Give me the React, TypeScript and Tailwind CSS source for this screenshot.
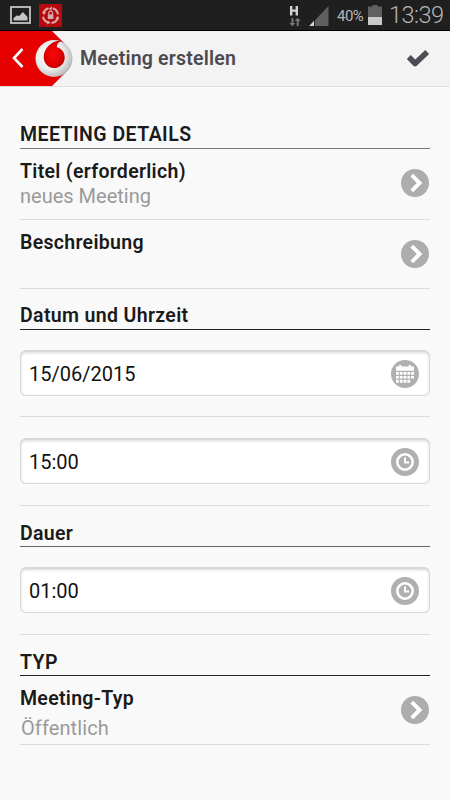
import type { ReactNode } from "react";

const ArrowIcon = () => (
  <svg className="h-7 w-7" viewBox="0 0 28 28">
    <circle cx="14" cy="14" r="14" fill="#adadad" />
    <path d="m10.800 6.200 7.800 7.800-7.800 7.800" fill="none" stroke="#fff" strokeWidth="3.900" />
  </svg>
);

const ClockIcon = () => (
  <svg className="h-7 w-7" viewBox="0 0 28 28">
    <circle cx="14" cy="14" r="14" fill="#b0b0b0" />
    <circle cx="14" cy="14" r="7.700" fill="none" stroke="#fff" strokeWidth="2.600" />
    <path d="M14 9.500v5h4" fill="none" stroke="#fff" strokeWidth="1.900" />
  </svg>
);

const CalendarIcon = () => (
  <svg className="h-7 w-7" viewBox="0 0 28 28">
    <circle cx="14" cy="14" r="14" fill="#b0b0b0" />
    <path d="M5 6.500h3V5h2.300v1.500h7.400V5H20v1.500h3v4.300H5z" fill="#fff" />
    <path
      d="M5 12h2.800v2.700H5zM8.800 12h2.800v2.700H8.800zM12.600 12h2.800v2.700h-2.800zM16.400 12h2.800v2.700h-2.800zM20.200 12H23v2.700h-2.800zM5 15.900h2.800v2.700H5zM8.800 15.900h2.800v2.700H8.800zM12.600 15.900h2.800v2.700h-2.800zM16.400 15.900h2.800v2.700h-2.800zM20.200 15.900H23v2.700h-2.800zM5 19.800h2.800v2.900H5zM8.800 19.800h2.800v2.900H8.800zM12.600 19.800h2.800v2.900h-2.800zM16.400 19.800h2.800v2.900h-2.800z"
      fill="#fff"
    />
  </svg>
);

const StatusBar = () => (
  <div className="flex h-[31px] items-start border-b border-black bg-[#1f1f1f] text-[#b5b5b5]">
    <svg className="mt-[5px] ml-[10px] h-5 w-[21px] shrink-0" viewBox="0 0 21 20">
      <rect x="1" y="2" width="19" height="16" fill="none" stroke="#c4c4c4" strokeWidth="1.800" />
      <path d="M3.500 15.500v-2.300l3.400-3 2 1 4-4.200 4.600 5v3.500z" fill="#c4c4c4" />
    </svg>
    <svg className="mt-1 ml-2 h-[23px] w-[23px] shrink-0" viewBox="0 0 23 23">
      <rect width="23" height="23" fill="#b5090e" />
      <g fill="none" stroke="#d9a7a5" strokeWidth="2">
        <path d="M9.500 4.200A7.600 7.600 0 0 0 4.400 9M4 12.800a7.600 7.600 0 0 0 5 5.700M12.500 19a7.600 7.600 0 0 0 6.200-4.600M19 10.300a7.600 7.600 0 0 0-5.200-6" />
        <path d="M9.700 10.500V9a1.900 1.900 0 0 1 3.800 0v1.500" strokeWidth="1.200" />
      </g>
      <path d="M8.800 10.300h5.600V15H8.800zM3 8l4 .3-2 3zM8 20.500l.7-4.300 3 2.600zM20.500 15.200l-4.200-.5 2.600-3zM13 2.500l-.6 4.300-2.800-2.400z" fill="#d9a7a5" />
    </svg>
    <svg className="mt-[5px] ml-[227px] h-[22px] w-[13px] shrink-0" viewBox="0 0 13 22">
      <path d="M1 1h2.400v3.500h3.200V1H9v9.500H6.600V6.700H3.400v3.800H1z" fill="#d2d2d2" />
      <path d="M2.400 13h2v5h2L3.400 21.200.4 18h2zM7.700 21v-5h-2l3-3.200 3 3.200h-2v5z" fill="#777" />
    </svg>
    <svg className="mt-[6px] ml-[7px] h-5 w-5 shrink-0" viewBox="0 0 20 20">
      <path d="M19.500 0v20h-19z" fill="#5f5f5f" />
      <path d="M5 14.800V20H.2z" fill="#d5d5d5" />
      <path d="M5.500 13v7" stroke="#1f1f1f" />
    </svg>
    <span className="mt-[6px] ml-2 w-7 shrink-0 text-[15px] leading-5 tracking-[-0.5px] whitespace-nowrap">40%</span>
    <svg className="mt-[5px] ml-[3px] h-5 w-[14px] shrink-0" viewBox="0 0 14 20">
      <path d="M4.500 0h5v1.500H14V12H0V1.500h4.500z" fill="#606060" />
      <path d="M0 12h14v8H0z" fill="#cacaca" />
    </svg>
    <span className="ml-[7px] text-[23.5px] leading-[31px] font-light tracking-[-0.5px] whitespace-nowrap">13:39</span>
  </div>
);

const Header = () => (
  <div className="flex h-14 border-b border-[#dedede] bg-[#f3f3f3]">
    <svg className="h-[55px] w-20 shrink-0" viewBox="0 0 80 55">
      <defs>
        <radialGradient id="silver" cx="0.4" cy="0.42" r="0.7">
          <stop offset="0" stopColor="#fff" />
          <stop offset="0.55" stopColor="#ebebeb" />
          <stop offset="0.8" stopColor="#c4c4c4" />
          <stop offset="1" stopColor="#a0a0a0" />
        </radialGradient>
        <radialGradient id="drop" cx="0.45" cy="0.5" r="0.6">
          <stop offset="0" stopColor="#fa0a0a" />
          <stop offset="0.65" stopColor="#e00000" />
          <stop offset="1" stopColor="#a80000" />
        </radialGradient>
      </defs>
      <path d="M0 0h52l13 13v29L52 55H0z" fill="#e60000" />
      <circle cx="54" cy="27.500" r="18.500" fill="url(#silver)" />
      <path d="M62 9.800c-3.600.9-5.200 3.200-5.200 6.400 4.800 1.200 7.900 5 7.900 10.200 0 6-4.700 10.600-10.500 10.600-6 0-10.500-4.900-10.500-11C43.700 17.200 51.700 9 62 9.800z" fill="url(#drop)" />
      <path d="m22.500 18-8.500 9 8.500 9" fill="none" stroke="#fff" strokeWidth="2.600" />
    </svg>
    <h1 className="flex-1 pt-4 text-[19.5px] leading-6 font-semibold tracking-[0.2px] text-[#4a4a50]">Meeting erstellen</h1>
    <svg className="mt-[18px] mr-5 h-[19px] w-6" viewBox="0 0 24 19">
      <path d="m2.800 8 6.300 6.500L21.200 3" fill="none" stroke="#4d4d54" strokeWidth="5.600" strokeLinejoin="round" />
    </svg>
  </div>
);

type DetailRowProps = {
  title: string;
  value?: string;
  className: string;
  valueClassName?: string;
};

const DetailRow = ({ title, value, className, valueClassName = "" }: DetailRowProps) => (
  <div className={`flex justify-between border-b border-[#dcdcdc] ${className}`}>
    <div className="leading-[25px]">
      <div className="text-[19.5px] font-semibold tracking-[0.3px]">{title}</div>
      {value && <div className={`text-[#999] ${valueClassName}`}>{value}</div>}
    </div>
    <div className="mt-[10px] mr-[1px]">
      <ArrowIcon />
    </div>
  </div>
);

const Field = ({ value, icon, className }: { value: string; icon: ReactNode; className: string }) => (
  <div className={`border-b border-[#dcdcdc] ${className}`}>
    <div className="flex h-[46px] items-center justify-between rounded-md border border-t-2 border-[#d8d8d8] bg-white pr-[10px] pl-2 text-[#111] shadow-[inset_0_1px_3px_rgba(0,0,0,0.15)]">
      <span>{value}</span>
      {icon}
    </div>
  </div>
);

const App = () => {
  return (
    <div className="h-[800px] w-[450px] overflow-hidden bg-[#f9f9f9] font-['Roboto',sans-serif] text-[#1a1a1a]">
      <StatusBar />
      <Header />
      <div className="px-5 text-[20px] leading-6">
        <h2 className="h-[62px] border-b border-[#777] pt-9 text-[19.5px] font-semibold tracking-[0.45px]">MEETING DETAILS</h2>
        <DetailRow title="Titel (erforderlich)" value="neues Meeting" className="h-[71px] pt-[9.5px]" />
        <DetailRow title="Beschreibung" className="h-[69px] pt-[10px]" />
        <h2 className="h-[41px] border-b border-[#222] pt-[15px] text-[19.5px] font-semibold tracking-[0.35px]">Datum und Uhrzeit</h2>
        <Field value="15/06/2015" icon={<CalendarIcon />} className="h-[87px] pt-5" />
        <Field value="15:00" icon={<ClockIcon />} className="h-[89px] pt-[21px]" />
        <h2 className="h-[41px] border-b border-[#666] pt-4 text-[19.5px] font-semibold tracking-[0.3px]">Dauer</h2>
        <Field value="01:00" icon={<ClockIcon />} className="h-[88px] pt-5" />
        <h2 className="h-[41px] border-b border-[#222] pt-4 text-[19.5px] font-semibold tracking-[0.4px]">TYP</h2>
        <DetailRow
          title="Meeting-Typ"
          value="Öffentlich"
          className="h-[69px] pt-[10px]"
          valueClassName="pt-[5px] pl-[1px] tracking-[0.1px]"
        />
      </div>
    </div>
  );
};

export default App;
